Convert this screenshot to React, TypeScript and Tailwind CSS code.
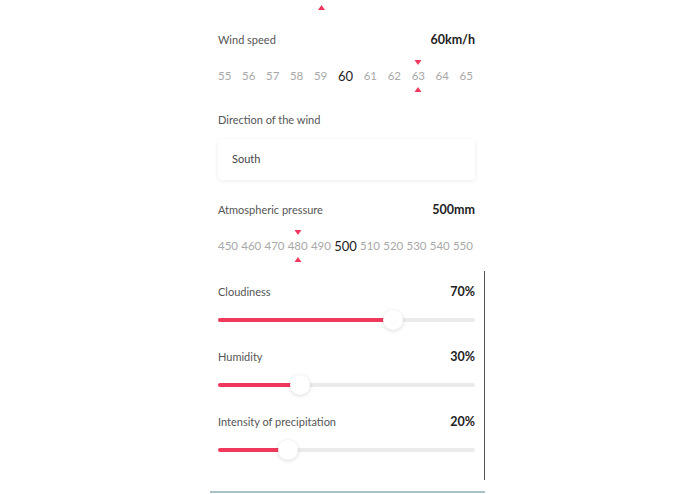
import React from 'react';

const PINK = '#f0385c';

const Tri = ({ up }: { up?: boolean }) => (
  <svg width="7" height="5" viewBox="0 0 7 5" className="block">
    <path d={up ? 'M3.5 0L7 5H0Z' : 'M0 0H7L3.5 5Z'} fill={PINK} />
  </svg>
);

function Header({ label, value }: { label: string; value: string }) {
  return (
    <div className="flex items-center justify-between h-4">
      <span className="text-[11px] text-[#555]">{label}</span>
      <span className="text-[12.5px] font-bold text-[#222]">{value}</span>
    </div>
  );
}

function Ruler({ values, active, marked }: { values: number[]; active: number; marked: number }) {
  return (
    <div className="flex items-center justify-between h-4">
      {values.map((v) => (
        <span
          key={v}
          className={`relative leading-4 ${
            v === active ? 'text-[13px] text-[#222]' : 'text-[11.5px] text-[#a8a8a8]'
          }`}
        >
          {v}
          {v === marked && (
            <>
              <span className="absolute left-1/2 -translate-x-1/2 -top-[8px]">
                <Tri />
              </span>
              <span className="absolute left-1/2 -translate-x-1/2 -bottom-[8px]">
                <Tri up />
              </span>
            </>
          )}
        </span>
      ))}
    </div>
  );
}

function Slider({ label, value, thumb }: { label: string; value: string; thumb: number }) {
  return (
    <div>
      <Header label={label} value={value} />
      <div className="relative h-5 mt-[10px]">
        <div className="absolute left-0 right-0 top-[8px] h-[4px] rounded-full bg-[#ebebeb]" />
        <div
          className="absolute left-0 top-[8px] h-[4px] rounded-full"
          style={{ width: thumb, background: PINK }}
        />
        <div
          className="absolute top-0 w-5 h-5 -ml-[10px] rounded-full bg-white shadow-[0_1px_4px_rgba(0,0,0,0.15)]"
          style={{ left: thumb }}
        />
      </div>
    </div>
  );
}

export default function App() {
  return (
    <div
      className="w-[695px] h-[494px] bg-white overflow-hidden"
      style={{ fontFamily: 'Lato, "Open Sans", sans-serif' }}
    >
      <div className="ml-[218px] w-[257px]">
        <div className="pt-[5px] pl-[100px]">
          <Tri up />
        </div>

        <div className="mt-[22px]">
          <Header label="Wind speed" value="60km/h" />
        </div>
        <div className="mt-[20px] pr-[2px]">
          <Ruler values={[55, 56, 57, 58, 59, 60, 61, 62, 63, 64, 65]} active={60} marked={63} />
        </div>

        <div className="mt-[28px] h-4 flex items-center text-[11px] text-[#555]">
          Direction of the wind
        </div>
        <div className="mt-[11px] h-[41px] flex items-center pl-[14px] bg-white rounded-sm shadow-[0_1px_5px_rgba(0,0,0,0.08)] text-[11px] text-[#444]">
          South
        </div>

        <div className="mt-[22px]">
          <Header label="Atmospheric pressure" value="500mm" />
        </div>
        <div className="mt-[20px] pr-[2px]">
          <Ruler
            values={[450, 460, 470, 480, 490, 500, 510, 520, 530, 540, 550]}
            active={500}
            marked={480}
          />
        </div>
      </div>

      <div className="mt-[17px] ml-[218px] w-[267px] pr-[9px] border-r border-[#555] pt-[13px] pb-[20px] flex flex-col gap-[19px]">
        <Slider label="Cloudiness" value="70%" thumb={175} />
        <Slider label="Humidity" value="30%" thumb={82} />
        <Slider label="Intensity of precipitation" value="20%" thumb={70} />
      </div>

      <div className="mt-[11px] ml-[210px] w-[275px] border-t-2 border-[#a9c1c7]" />
    </div>
  );
}
